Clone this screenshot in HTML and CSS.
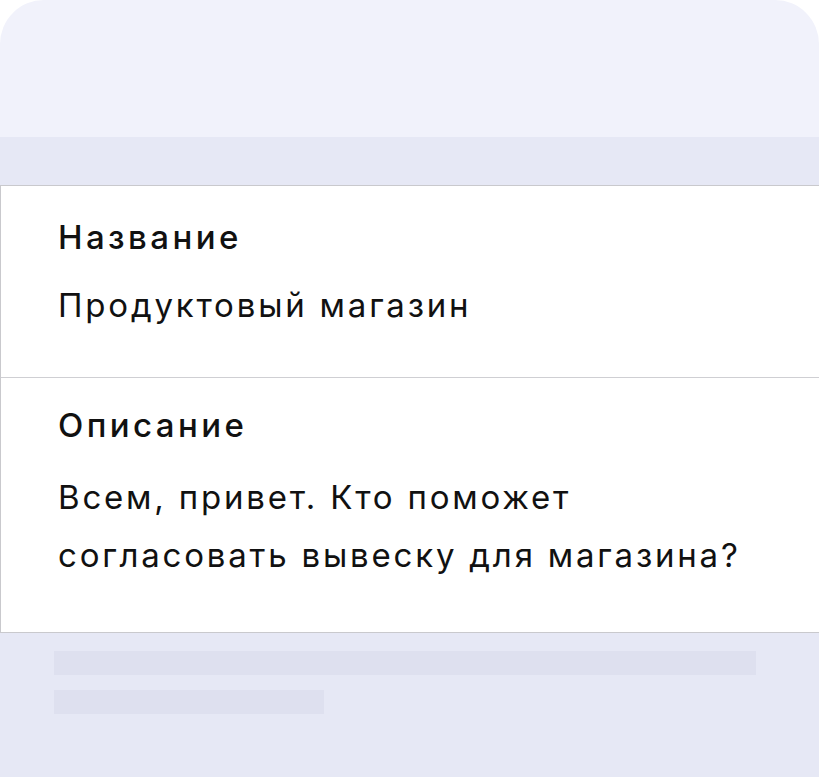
FILE: index.html
```html
<!DOCTYPE html>
<html lang="ru">
<head>
<meta charset="utf-8">
<link rel="stylesheet" href="styles.css">
</head>
<body>
<div class="frame">
  <div class="header"></div>
  <div class="band"></div>
  <div class="card">
    <div class="field field-first">
      <div class="label">Название</div>
      <div class="value value-first">Продуктовый магазин</div>
    </div>
    <div class="field field-second">
      <div class="label">Описание</div>
      <div class="value value-second">Всем, привет. Кто поможет<br>согласовать вывеску для магазина?</div>
    </div>
  </div>
  <div class="footer">
    <div class="bar bar-long"></div>
    <div class="bar bar-short"></div>
  </div>
</div>
</body>
</html>
```
FILE: styles.css
```css
html, body {
  margin: 0;
  padding: 0;
  background: #ffffff;
}
body {
  width: 819px;
  height: 777px;
  overflow: hidden;
  font-family: Inter, "Noto Sans", sans-serif;
  color: #111111;
}
.frame {
  display: flex;
  flex-direction: column;
  height: 777px;
}
.header {
  height: 137px;
  background: #f1f2fb;
  border-radius: 44px 44px 0 0;
}
.band {
  height: 48px;
  background: #e6e8f5;
}
.card {
  background: #ffffff;
  border-top: 1px solid #c9c9cd;
  border-left: 1px solid #c9c9cd;
  border-bottom: 1px solid #c9c9cd;
  height: 446px;
  display: flex;
  flex-direction: column;
}
.field {
  padding-left: 57px;
}
.field-first {
  height: 192px;
  border-bottom: 1px solid #cfcfd3;
  box-sizing: border-box;
  padding-top: 27px;
}
.field-second {
  padding-top: 23px;
}
.label {
  font-size: 33px;
  font-weight: 500;
  line-height: 48px;
  letter-spacing: 3.4px;
}
.value {
  font-size: 33px;
  font-weight: 400;
  line-height: 58px;
  letter-spacing: 2.8px;
}
.value-first {
  margin-top: 15px;
}
.value-second {
  margin-top: 19px;
}
.footer {
  flex: 1;
  background: #e6e8f5;
  padding: 18px 0 0 54px;
  display: flex;
  flex-direction: column;
  gap: 15px;
}
.bar {
  height: 24px;
  background: #dee0ef;
}
.bar-long { width: 702px; }
.bar-short { width: 270px; }
```
